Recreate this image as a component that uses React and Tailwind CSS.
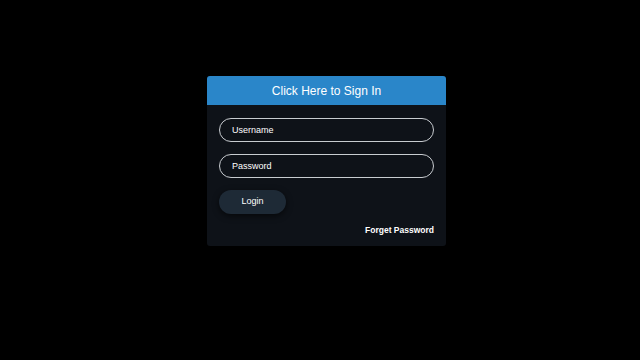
import React, { useState } from 'react';

function App() {
  const [username, setUsername] = useState('');
  const [password, setPassword] = useState('');

  return (
    <div className="w-[640px] h-[360px] bg-black flex items-start justify-center pt-[76px]" style={{ fontFamily: '"Liberation Sans", Arial, sans-serif' }}>
      <div className="ml-[13px] w-[239px] h-[170px] rounded-[3px] overflow-hidden bg-[#0e1218] flex flex-col">
        <div className="h-[29px] bg-[#2a86c9] flex items-center justify-center pt-[1px] text-white text-[12px]">
          Click Here to Sign In
        </div>
        <div className="flex flex-col px-3 pt-[13px]">
          <input
            value={username}
            onChange={(e) => setUsername(e.target.value)}
            placeholder="Username"
            className="h-[24px] w-[215px] rounded-full border border-[#c8ccd0] bg-transparent px-3 text-[9px] text-white placeholder:text-white outline-none"
          />
          <input
            type="password"
            value={password}
            onChange={(e) => setPassword(e.target.value)}
            placeholder="Password"
            className="mt-[12px] h-[24px] w-[215px] rounded-full border border-[#c8ccd0] bg-transparent px-3 text-[9px] text-white placeholder:text-white outline-none"
          />
          <button className="mt-[12px] h-[24px] w-[67px] rounded-full bg-[#1e2a36] text-white text-[9px] shadow-[0_2px_6px_rgba(0,0,0,0.6)]">
            Login
          </button>
          <div className="mt-[10px] w-[215px] text-right text-white text-[8.5px] font-bold">
            Forget Password
          </div>
        </div>
      </div>
    </div>
  );
}

export default App;
